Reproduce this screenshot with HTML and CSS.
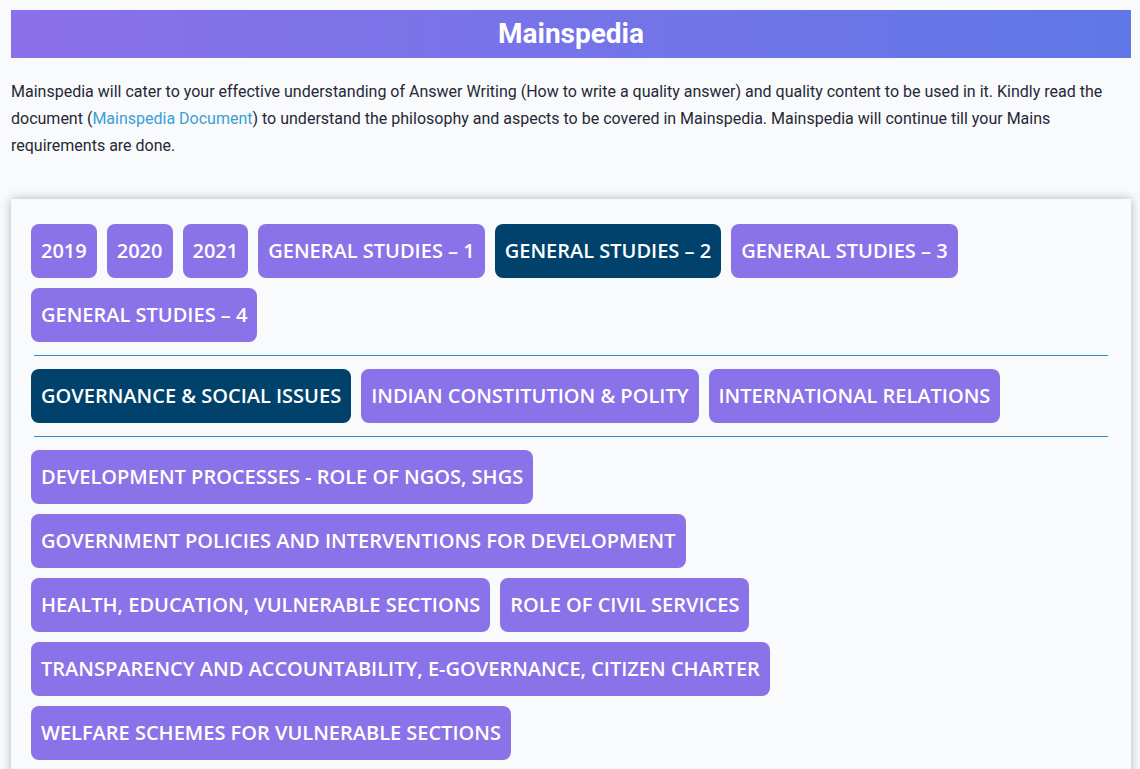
FILE: index.html
```html
<!DOCTYPE html>
<html lang="en">
<head>
    <meta charset="UTF-8">
    <meta name="viewport" content="width=device-width, initial-scale=1.0">
    <title>Mainspedia</title>
    <link rel="stylesheet" href="styles.css">
</head>
<body>
    <div id="page">
        <h1 class="banner">Mainspedia</h1>
        <p class="intro">Mainspedia will cater to your effective understanding of Answer Writing (How to write a quality answer) and quality content to be used in it. Kindly read the document (<a href="#">Mainspedia Document</a>) to understand the philosophy and aspects to be covered in Mainspedia. Mainspedia will continue till your Mains requirements are done.</p>

        <div class="card">
            <div class="tabs">
                <a class="tab" href="#">2019</a>
                <a class="tab" href="#">2020</a>
                <a class="tab" href="#">2021</a>
                <a class="tab" href="#">GENERAL STUDIES – 1</a>
                <a class="tab active" href="#">GENERAL STUDIES – 2</a>
                <a class="tab" href="#">GENERAL STUDIES – 3</a>
                <a class="tab" href="#">GENERAL STUDIES – 4</a>
            </div>
            <hr class="divider">
            <div class="tabs">
                <a class="tab active" href="#">GOVERNANCE &amp; SOCIAL ISSUES</a>
                <a class="tab" href="#">INDIAN CONSTITUTION &amp; POLITY</a>
                <a class="tab" href="#">INTERNATIONAL RELATIONS</a>
            </div>
            <hr class="divider">
            <div class="tabs">
                <a class="tab" href="#">DEVELOPMENT PROCESSES - ROLE OF NGOS, SHGS</a>
                <a class="tab" href="#">GOVERNMENT POLICIES AND INTERVENTIONS FOR DEVELOPMENT</a>
                <a class="tab" href="#">HEALTH, EDUCATION, VULNERABLE SECTIONS</a>
                <a class="tab" href="#">ROLE OF CIVIL SERVICES</a>
                <a class="tab" href="#">TRANSPARENCY AND ACCOUNTABILITY, E-GOVERNANCE, CITIZEN CHARTER</a>
                <a class="tab" href="#">WELFARE SCHEMES FOR VULNERABLE SECTIONS</a>
            </div>
        </div>
    </div>
</body>
</html>
```

FILE: styles.css
```css
*{
    box-sizing: border-box;
}
body{
    font-family: Roboto, "Liberation Sans", sans-serif;
    background-color: #f9fafc;
    margin: 0;
    padding: 10px 9px 0 11px;
    color: #252836;
}
.banner{
    margin: 0;
    height: 48px;
    line-height: 48px;
    text-align: center;
    color: white;
    font-size: 28px;
    font-weight: 700;
    background: linear-gradient(90deg, #8b70e9, #6077e8);
}
.intro{
    margin: 20px 0 0 0;
    font-size: 16px;
    line-height: 27px;
}
.intro a{
    color: #3a9fd6;
    text-decoration: none;
}
.card{
    margin-top: 40px;
    padding: 25px 20px 30px 20px;
    background-color: #f9fafc;
    box-shadow: 0 0 10px rgba(0, 0, 0, 0.28);
    min-height: 700px;
}
.tabs{
    display: flex;
    flex-wrap: wrap;
    gap: 10px;
}
.tab{
    display: block;
    height: 54px;
    line-height: 54px;
    padding: 0 10px;
    border-radius: 8px;
    background-color: #8a72e8;
    color: white;
    text-decoration: none;
    font-family: "Open Sans", sans-serif;
    font-weight: 600;
    font-size: 20px;
    white-space: nowrap;
}
.tab.active{
    background-color: #00426b;
}
.divider{
    border: none;
    border-top: 1px solid #2f8ccc;
    margin: 13px 3px 13px 3px;
}
```
